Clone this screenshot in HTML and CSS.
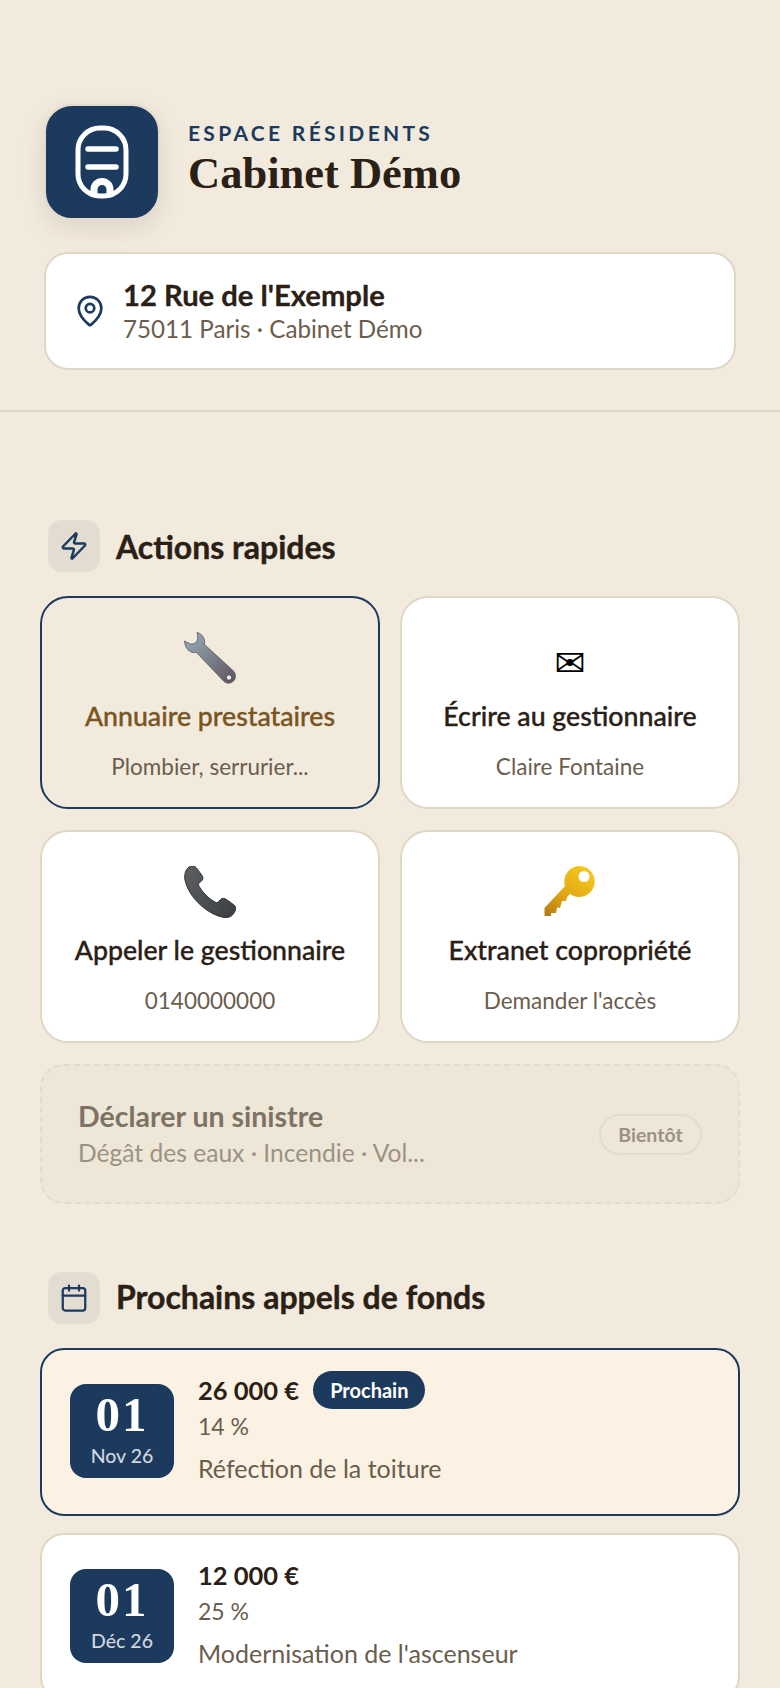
FILE: index.html
```html
<!DOCTYPE html>
<html lang="fr">
<head>
    <meta charset="UTF-8">
    <meta name="viewport" content="width=device-width, initial-scale=1.0">
    <title>Espace résidents</title>
    <link rel="stylesheet" href="styles.css">
</head>
<body>
    <header class="top">
        <div class="brand">
            <div class="logo">
                <svg width="60" height="80" viewBox="0 0 60 80" fill="none" stroke="#fff" stroke-width="5">
                    <rect x="6" y="6" width="48" height="68" rx="22"/>
                    <path d="M16 27H44M16 45H44" stroke-linecap="round" stroke-width="5.500"/>
                    <path d="M22 72V67.500A8 8 0 0 1 38 67.500V72" stroke-width="7"/>
                </svg>
            </div>
            <div class="brand-text">
                <div class="brand-over">ESPACE RÉSIDENTS</div>
                <h1 class="brand-name">Cabinet Démo</h1>
            </div>
        </div>
        <div class="address">
            <svg width="34" height="34" viewBox="0 0 24 24" fill="none" stroke="#1c3a5e" stroke-width="1.900" stroke-linecap="round" stroke-linejoin="round">
                <path d="M20 10c0 5-5.500 10.200-7.400 11.800a1 1 0 0 1-1.200 0C9.500 20.200 4 15 4 10a8 8 0 0 1 16 0"/>
                <circle cx="12" cy="10" r="3"/>
            </svg>
            <div>
                <div class="address-line">12 Rue de l'Exemple</div>
                <div class="address-sub">75011 Paris · Cabinet Démo</div>
            </div>
        </div>
    </header>

    <main class="content">
        <section class="actions">
            <div class="section-head">
                <span class="section-icon">
                    <svg width="30" height="30" viewBox="0 0 24 24" fill="none" stroke="#1c3a5e" stroke-width="2" stroke-linecap="round" stroke-linejoin="round">
                        <path d="M4 14a1 1 0 0 1-.8-1.600l9.900-10.200a.500.500 0 0 1 .9.500l-1.900 6a1 1 0 0 0 .9 1.300h7a1 1 0 0 1 .8 1.600l-9.900 10.200a.500.500 0 0 1-.9-.500l1.900-6a1 1 0 0 0-.9-1.300z"/>
                    </svg>
                </span>
                <h2>Actions rapides</h2>
            </div>

            <div class="action-grid">
                <a class="action action-active">
                    <span class="action-icon">
                        <svg width="52" height="52" viewBox="0 0 52 52">
                            <defs>
                                <linearGradient id="wrenchGrad" x1="0" y1="0" x2="1" y2="1">
                                    <stop offset="0" stop-color="#97adbf"/>
                                    <stop offset="0.4" stop-color="#808a94"/>
                                    <stop offset="1" stop-color="#5f5560"/>
                                </linearGradient>
                            </defs>
                            <path d="M13 .5C18 1.500 21.500 6.500 20.500 12.500L49 38.500C52.500 42 52 47 49 49.500 46 52 42 51.500 39.500 49L12.500 20.500C6 21.500 1 17 .5 9L5.500 11.500C8.500 13 12.500 11 13.500 8 14 5.500 13.500 3 13 .5Z" fill="url(#wrenchGrad)" stroke="#5a5560" stroke-width=".8"/>
                            <circle cx="45" cy="45.500" r="2.800" fill="#efeae2" stroke="#4d4650"/>
                        </svg>
                    </span>
                    <span class="action-title">Annuaire prestataires</span>
                    <span class="action-sub">Plombier, serrurier...</span>
                </a>
                <a class="action">
                    <span class="action-icon action-glyph">✉</span>
                    <span class="action-title">Écrire au gestionnaire</span>
                    <span class="action-sub">Claire Fontaine</span>
                </a>
                <a class="action">
                    <span class="action-icon">
                        <svg width="52" height="52" viewBox="0 0 52 52">
                            <defs>
                                <linearGradient id="phoneGrad" x1="0" y1="0" x2="1" y2="1">
                                    <stop offset="0" stop-color="#5e6163"/>
                                    <stop offset="1" stop-color="#3b3e42"/>
                                </linearGradient>
                            </defs>
                            <path d="M5 1C8 -.5 11 0 12.500 2L18 9.500C19.500 12 19 13.500 17.500 15L14 18C17 25 25 33.500 33 37L36.500 33.500C38 32 40.500 32 42.500 33.500L50 39C52 40.500 52 43 51 45 49.500 49 46 52 41 51.500 26 50 5 33 1 14 0 9 1.500 3.500 5 1Z" fill="url(#phoneGrad)" stroke="#2f3236"/>
                        </svg>
                    </span>
                    <span class="action-title">Appeler le gestionnaire</span>
                    <span class="action-sub">0140000000</span>
                </a>
                <a class="action">
                    <span class="action-icon">
                        <svg width="52" height="52" viewBox="0 0 52 52">
                            <defs>
                                <linearGradient id="keyGrad" x1="0.8" y1="0" x2="0.1" y2="1">
                                    <stop offset="0" stop-color="#f6c81c"/>
                                    <stop offset="0.6" stop-color="#e0a616"/>
                                    <stop offset="1" stop-color="#b87c12"/>
                                </linearGradient>
                            </defs>
                            <path d="M35.500 0A15.500 15.500 0 1 1 26 28L23.500 30.500 22 35 18 35 16 42 13 41.500 12 47 7 47V50H.5V42L21 20A15.500 15.500 0 0 1 35.500 0Z" fill="url(#keyGrad)"/>
                            <circle cx="40" cy="10.500" r="5.500" fill="#fff"/>
                        </svg>
                    </span>
                    <span class="action-title">Extranet copropriété</span>
                    <span class="action-sub">Demander l'accès</span>
                </a>
            </div>

            <div class="soon">
                <div>
                    <div class="soon-title">Déclarer un sinistre</div>
                    <div class="soon-sub">Dégât des eaux · Incendie · Vol...</div>
                </div>
                <span class="soon-badge">Bientôt</span>
            </div>
        </section>

        <section class="calls">
            <div class="section-head">
                <span class="section-icon">
                    <svg width="30" height="30" viewBox="0 0 24 24" fill="none" stroke="#1c3a5e" stroke-width="1.800" stroke-linecap="round" stroke-linejoin="round">
                        <path d="M8 2v4M16 2v4"/>
                        <rect x="3" y="4" width="18" height="18" rx="2"/>
                        <path d="M3 10h18"/>
                    </svg>
                </span>
                <h2>Prochains appels de fonds</h2>
            </div>

            <div class="call-list">
                <div class="call call-next">
                    <div class="call-date">
                        <span class="call-day">01</span>
                        <span class="call-month">Nov 26</span>
                    </div>
                    <div class="call-body">
                        <div class="call-top">
                            <span class="call-amount">26 000 €</span>
                            <span class="call-badge">Prochain</span>
                        </div>
                        <div class="call-share">14 %</div>
                        <div class="call-label">Réfection de la toiture</div>
                    </div>
                </div>
                <div class="call">
                    <div class="call-date">
                        <span class="call-day">01</span>
                        <span class="call-month">Déc 26</span>
                    </div>
                    <div class="call-body">
                        <div class="call-top">
                            <span class="call-amount">12 000 €</span>
                        </div>
                        <div class="call-share">25 %</div>
                        <div class="call-label">Modernisation de l'ascenseur</div>
                    </div>
                </div>
            </div>
        </section>
    </main>
</body>
</html>
```

FILE: styles.css
```css
* {
    box-sizing: border-box;
}

html, body {
    height: 1688px;
    overflow: hidden;
}

body {
    margin: 0;
    background-color: #f2eadc;
    color: #2a2015;
    font-family: "Lato", "Noto Sans", sans-serif;
}

h1, h2 {
    margin: 0;
}

/* header */
.top {
    padding: 104px 44px 40px;
    border-bottom: 2px solid #e0d6c6;
    height: 412px;
}

.brand {
    display: flex;
    align-items: center;
    gap: 28px;
}

.logo {
    width: 116px;
    height: 116px;
    flex: none;
    display: flex;
    align-items: center;
    justify-content: center;
    background-color: #1c3a5e;
    border: 2px solid #e4dbcc;
    border-radius: 28px;
    box-shadow: 0 8px 24px rgba(42, 32, 21, 0.1);
}

.brand-text {
    padding-bottom: 8px;
}

.brand-over {
    margin-bottom: 4px;
    color: #1c3a5e;
    font-size: 21px;
    font-weight: 700;
    letter-spacing: 3.300px;
    line-height: 26px;
}

.brand-name {
    font-family: "Liberation Serif", serif;
    font-size: 44.500px;
    font-weight: 700;
    line-height: 46px;
}

.address {
    display: flex;
    align-items: center;
    gap: 16px;
    height: 118px;
    margin-top: 32px;
    padding: 0 28px 0 27px;
    background-color: #fff;
    border: 2px solid #e0d6c6;
    border-radius: 24px;
}

.address-line {
    font-size: 29.200px;
    font-weight: 700;
    line-height: 32px;
    -webkit-text-stroke: 0.3px currentColor;
}

.address-sub {
    margin-top: 3px;
    color: #6b5d4d;
    font-size: 24.200px;
    line-height: 30px;
}

/* sections */
.content {
    padding: 108px 40px 0;
}

.section-head {
    display: flex;
    align-items: center;
    gap: 16px;
    padding-left: 8px;
    margin-bottom: 24px;
}

.section-head h2 {
    font-size: 32px;
    font-weight: 700;
    -webkit-text-stroke: 0.4px currentColor;
}

.calls .section-head h2 {
    padding-bottom: 4px;
}

.section-icon {
    width: 52px;
    height: 52px;
    display: flex;
    align-items: center;
    justify-content: center;
    background-color: #e3dcd0;
    border-radius: 14px;
}

.action-grid {
    display: grid;
    grid-template-columns: 340px 340px;
    grid-auto-rows: 213px;
    gap: 21px 20px;
}

.action {
    display: flex;
    flex-direction: column;
    align-items: center;
    padding-top: 34px;
    background-color: #fff;
    border: 2px solid #e0d6c6;
    border-radius: 28px;
}

.action-active {
    background-color: #f2eadc;
    border-color: #1c3a5e;
}

.action-active .action-title {
    color: #7a5520;
}

.action-icon {
    height: 52px;
    display: flex;
    align-items: center;
    justify-content: center;
}

.action-glyph {
    padding-top: 10px;
    color: #000;
    font-family: "DejaVu Sans", sans-serif;
    font-size: 37px;
}

.action-title {
    margin-top: 15px;
    font-size: 26.700px;
    font-weight: 500;
    line-height: 34px;
    -webkit-text-stroke: 0.35px currentColor;
}

.action-sub {
    margin-top: 20px;
    color: #6b5d4d;
    font-size: 22.500px;
    line-height: 28px;
}

.soon {
    display: flex;
    align-items: center;
    justify-content: space-between;
    height: 140px;
    margin-top: 21px;
    padding: 0 36px;
    background-color: #eee6d7;
    border: 2px dashed #e3dbcc;
    border-radius: 24px;
}

.soon-title {
    margin-bottom: 4px;
    color: #7d7365;
    font-size: 28.500px;
    font-weight: 700;
    line-height: 34px;
}

.soon-sub {
    color: #9b9284;
    font-size: 24.600px;
    line-height: 32px;
}

.soon-badge {
    width: 103px;
    height: 41px;
    line-height: 37px;
    text-align: center;
    color: #9b9284;
    font-size: 19.500px;
    font-weight: 700;
    border: 2px solid #e3dbcc;
    border-radius: 21px;
}

.calls {
    margin-top: 68px;
}

.call-list {
    display: flex;
    flex-direction: column;
    gap: 17px;
    width: 700px;
}

.call {
    display: flex;
    align-items: center;
    gap: 24px;
    height: 168px;
    padding: 0 28px;
    background-color: #fff;
    border: 2px solid #e0d6c6;
    border-radius: 24px;
}

.call-next {
    background-color: #fcf2e3;
    border-color: #1c3a5e;
}

.call-date {
    width: 104px;
    height: 94px;
    margin-bottom: 3px;
    flex: none;
    display: flex;
    flex-direction: column;
    align-items: center;
    justify-content: center;
    color: #fff;
    background-color: #1c3a5e;
    border-radius: 16px;
}

.call-day {
    font-family: "Liberation Serif", serif;
    font-size: 49px;
    font-weight: 700;
    letter-spacing: 2px;
    line-height: 46px;
}

.call-month {
    margin-top: 5px;
    color: #cfd6df;
    font-size: 19.500px;
    font-weight: 500;
    line-height: 26px;
}

.call-body {
    padding-bottom: 9px;
}

.call-top {
    display: flex;
    align-items: center;
    gap: 14px;
    height: 38px;
}

.call-amount {
    font-size: 25.500px;
    font-weight: 700;
}

.call-badge {
    height: 38px;
    padding: 0 17px;
    line-height: 38px;
    color: #fff;
    background-color: #1c3a5e;
    font-size: 20px;
    font-weight: 700;
    border-radius: 19px;
}

.call-share {
    margin-top: 1px;
    color: #6b5d4d;
    font-size: 23px;
    line-height: 32px;
}

.call-label {
    margin-top: 10px;
    color: #6b5d4d;
    font-size: 25px;
    line-height: 32px;
}
```
